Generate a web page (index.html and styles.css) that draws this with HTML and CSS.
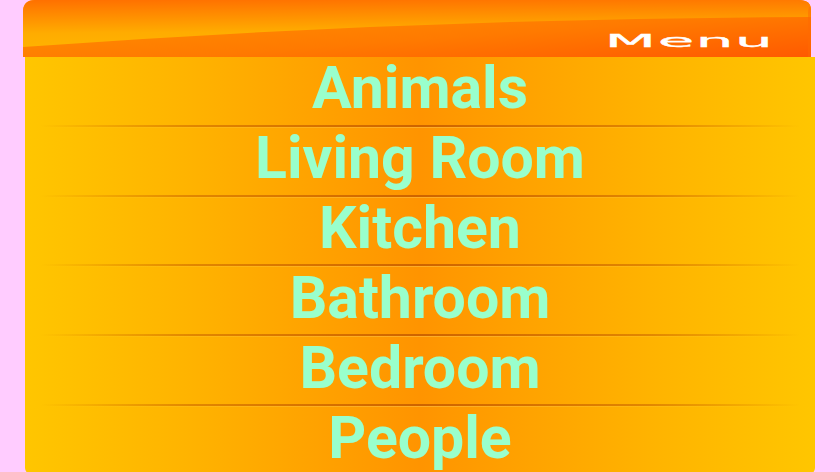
FILE: index.html
```html
<!DOCTYPE html>
<html>
<head>
<meta charset="utf-8">
<link rel="stylesheet" href="styles.css">
</head>
<body>
<div class="page">
  <header class="menu-head">
    <svg class="head-bg" viewBox="0 0 788 57" preserveAspectRatio="none" aria-hidden="true">
      <defs>
        <linearGradient id="lower" x1="0" y1="0" x2="1" y2="1">
          <stop offset="0" stop-color="#ff9600"/>
          <stop offset="0.6" stop-color="#ff7a00"/>
          <stop offset="1" stop-color="#ff5a00"/>
        </linearGradient>
        <linearGradient id="upper" x1="0" y1="0" x2="0.12" y2="1">
          <stop offset="0" stop-color="#ff7000"/>
          <stop offset="0.7" stop-color="#ffac00"/>
          <stop offset="1" stop-color="#ffb200"/>
        </linearGradient>
      </defs>
      <path d="M0 12 Q0 0 12 0 L776 0 Q788 0 788 10 L788 57 L0 57 Z" fill="url(#lower)"/>
      <path d="M0 12 Q0 0 12 0 L776 0 Q788 0 788 10 L788 17 Q400 18 0 47 Z" fill="url(#upper)"/>
      <path d="M786 6 Q788 8 788 12 L788 57 L785 57 L785 12 Z" fill="#ff6a00" opacity="0.5"/>
    </svg>
    <span class="head-title">Menu</span>
  </header>
  <nav class="menu-body">
    <a class="item">Animals</a>
    <a class="item">Living Room</a>
    <a class="item">Kitchen</a>
    <a class="item">Bathroom</a>
    <a class="item">Bedroom</a>
    <a class="item">People</a>
  </nav>
</div>
</body>
</html>
```
FILE: styles.css
```css
html, body {
  margin: 0;
  padding: 0;
  background: #ffccff;
  overflow: hidden;
}
.page {
  width: 840px;
  height: 472px;
  display: flex;
  flex-direction: column;
}
.menu-head {
  position: relative;
  margin-left: 23px;
  width: 788px;
  height: 57px;
  flex: none;
  display: flex;
  align-items: flex-end;
  justify-content: flex-end;
}
.head-bg {
  position: absolute;
  left: 0;
  top: 0;
  width: 788px;
  height: 57px;
}
.head-title {
  position: relative;
  display: inline-block;
  font-family: "DejaVu Sans", sans-serif;
  font-size: 18px;
  line-height: 18px;
  color: #ffffff;
  letter-spacing: 0.5px;
  transform: scaleX(3.3);
  transform-origin: right center;
  margin-right: 37px;
  margin-bottom: 7px;
  -webkit-text-stroke: 0.3px #ffffff;
}
.menu-body {
  margin-left: 25px;
  width: 790px;
  height: 417px;
  flex: none;
  display: flex;
  flex-direction: column;
  border-radius: 0 0 6px 6px;
  background: linear-gradient(to right, #ffc600 0%, #ffb400 20%, #ff9400 50%, #ffb400 80%, #ffc600 100%);
}
.item {
  flex: 1;
  position: relative;
  display: flex;
  align-items: center;
  justify-content: center;
  font-family: Roboto, "Liberation Sans", sans-serif;
  font-weight: bold;
  font-size: 59px;
  line-height: 1;
  color: #99ffcc;
  padding-bottom: 6px;
  box-sizing: border-box;
}
.item + .item {
  border-top: 2px solid transparent;
}
.item + .item::before {
  content: "";
  position: absolute;
  left: 15px;
  right: 15px;
  top: -2px;
  height: 2px;
  background: linear-gradient(to right, rgba(200,110,0,0) 0%, rgba(205,105,0,0.6) 20%, rgba(200,95,0,0.9) 50%, rgba(205,105,0,0.6) 80%, rgba(200,110,0,0) 100%);
}
.item + .item::after {
  content: "";
  position: absolute;
  left: 15px;
  right: 15px;
  top: 0;
  height: 1px;
  background: linear-gradient(to right, rgba(255,230,120,0) 0%, rgba(255,220,110,0.35) 50%, rgba(255,230,120,0) 100%);
}
```
